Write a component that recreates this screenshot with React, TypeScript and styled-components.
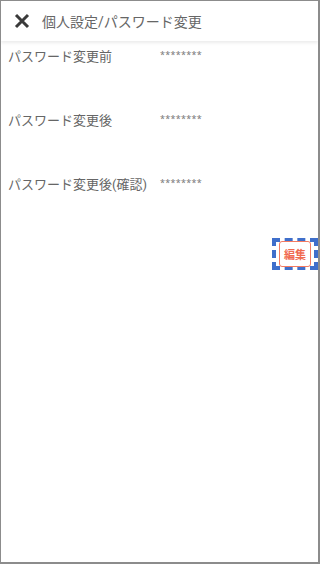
import React from 'react'
import styled, { createGlobalStyle } from 'styled-components'

const Global = createGlobalStyle`
  html, body {
    margin: 0;
    padding: 0;
    background: #fff;
  }
  * {
    box-sizing: border-box;
  }
  body {
    font-family: Roboto, "Noto Sans CJK JP", sans-serif;
  }
`

const Frame = styled.div`
  width: 320px;
  height: 564px;
  border: 1px solid #8c8c8c;
  border-right-width: 2px;
  border-bottom-width: 2px;
  background: #fff;
  overflow: hidden;
  display: flex;
  flex-direction: column;
`

const Header = styled.header`
  height: 40px;
  flex-shrink: 0;
  display: flex;
  align-items: center;
  padding-left: 12px;
  column-gap: 11px;
  background: #fff;
  box-shadow: 0 2px 3px rgba(0, 0, 0, 0.08);
  position: relative;
  z-index: 1;
`

const Close = styled.button`
  width: 18px;
  height: 18px;
  padding: 0;
  border: none;
  background: none;
  display: flex;
  align-items: center;
  justify-content: center;
`

const Title = styled.h1`
  margin: 0;
  font-size: 14px;
  font-weight: 400;
  color: #666;
  font-family: Roboto, "Noto Sans CJK JP", sans-serif;
`

const Content = styled.main`
  padding-top: 6px;
  display: flex;
  flex-direction: column;
`

const Row = styled.div`
  height: 64px;
  display: flex;
  align-items: flex-start;
  padding-left: 7px;
`

const Label = styled.span`
  width: 152px;
  font-size: 13px;
  line-height: 20px;
  color: #666;
  font-family: Roboto, "Noto Sans CJK JP", sans-serif;
`

const Value = styled.span`
  font-size: 9px;
  line-height: 16px;
  color: #777;
  letter-spacing: 0.3px;
  font-family: "Noto Sans", sans-serif;
`

const Actions = styled.div`
  display: flex;
  justify-content: flex-end;
  margin-top: -1px;
`

const Focus = styled.div`
  border: 4px dashed #3f6fcb;
  padding: 0 3px;
  display: flex;
  align-items: center;
  height: 32px;
`

const EditButton = styled.button`
  width: 32px;
  height: 26px;
  padding: 0;
  border: 1.5px solid #f47b62;
  border-radius: 3px;
  background: #fff;
  color: #f06a50;
  font-size: 11px;
  font-weight: 700;
  font-family: "Noto Sans CJK JP", sans-serif;
  line-height: 20px;
`

const rows = ['パスワード変更前', 'パスワード変更後', 'パスワード変更後(確認)']

export default function App() {
  return (
    <>
      <Global />
      <Frame>
        <Header>
          <Close aria-label="close">
            <svg width="16" height="16" viewBox="0 0 16 16">
              <path d="M2 2 L14 14 M14 2 L2 14" stroke="#3a3a3a" strokeWidth="3" strokeLinecap="butt" />
            </svg>
          </Close>
          <Title>個人設定/パスワード変更</Title>
        </Header>
        <Content>
          {rows.map((label) => (
            <Row key={label}>
              <Label>{label}</Label>
              <Value>********</Value>
            </Row>
          ))}
          <Actions>
            <Focus>
              <EditButton>編集</EditButton>
            </Focus>
          </Actions>
        </Content>
      </Frame>
    </>
  )
}
